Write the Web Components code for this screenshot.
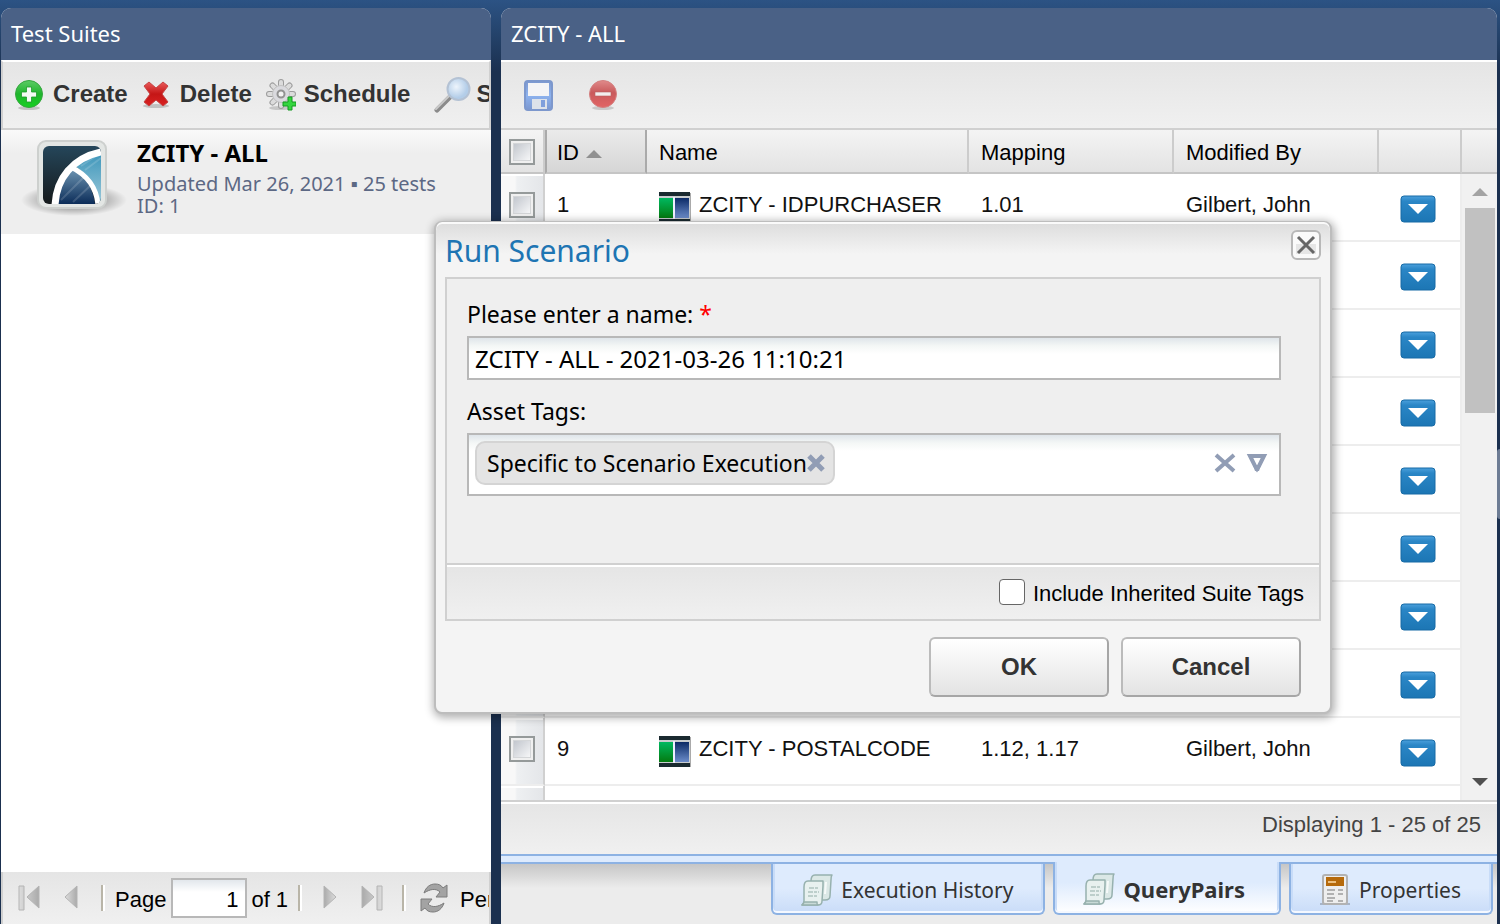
<!DOCTYPE html>
<html lang="en">
<head>
<meta charset="utf-8">
<title>Test Suites</title>
<style>
  html, body {
    height: 100%;
  }
  body {
    margin: 0;
    overflow: hidden;
    background: #1b304f linear-gradient(#2c5384, #1b304f 72px) no-repeat;
    font-family: "Liberation Sans", Arial, sans-serif;
    font-size: 22px;
    color: #000;
    --ui-font: "Noto Sans", Tahoma, sans-serif;
    --line: #d0d0d0;
    --bar: linear-gradient(#e5e5e5, #f0f0f0);
  }
</style>
</head>
<body>
<suite-app></suite-app>

<script>
const ICONS = {
  create: ['0 0 32 32', `
    <defs><linearGradient id="g" x2="0" y2="1"><stop stop-color="#5ccb66"/><stop offset=".5" stop-color="#1fb52c"/><stop offset="1" stop-color="#16d022"/></linearGradient></defs>
    <ellipse cx="16" cy="29" rx="11" ry="2" fill="#000" opacity=".18"/>
    <circle cx="16" cy="15" r="13.5" fill="url(#g)" stroke="#35a63e"/>
    <path d="M13.500 8h5v5h5v5h-5v5h-5v-5h-5v-5h5z" fill="#f4fbf4" stroke="#1d9a2a" stroke-width=".8"/>`],
  remove: ['0 0 32 32', `
    <defs><linearGradient id="g" x2="0" y2="1"><stop stop-color="#ea5a5a"/><stop offset=".5" stop-color="#c51616"/><stop offset="1" stop-color="#d92222"/></linearGradient></defs>
    <ellipse cx="16" cy="27" rx="13" ry="2" fill="#000" opacity=".18"/>
    <path d="M4 7l5-4 7 6 7-6 5 4-6 8 6 8-5 4-7-6-7 6-5-4 6-8z" fill="url(#g)" stroke="#c54444"/>`],
  schedule: ['0 0 32 32', `
    <ellipse cx="16" cy="29" rx="11" ry="2" fill="#000" opacity=".16"/>
    <g fill="none" stroke-linecap="round">
      <path d="M17 3v24M5 15h24M8.500 6.500l17 17M25.500 6.500l-17 17" stroke="#9c9c9c" stroke-width="6"/>
      <path d="M17 3v24M5 15h24M8.500 6.500l17 17M25.500 6.500l-17 17" stroke="#dcdcdc" stroke-width="4"/>
    </g>
    <circle cx="17" cy="15" r="8.500" fill="#dadade" stroke="#c2c2c2"/>
    <circle cx="17" cy="15" r="3.500" fill="#f2f2f2" stroke="#929292" stroke-width="2"/>
    <path d="M24 18h4v5h4v4h-4v4h-4v-4h-5v-4h5z" fill="#35d53f" stroke="#149a20"/>`],
  search: ['0 0 38 38', `
    <defs><radialGradient id="g" cx=".4" cy=".4"><stop stop-color="#eef5fc"/><stop offset="1" stop-color="#b3cde8"/></radialGradient></defs>
    <path d="M3 34L16 21" stroke="#8b8b8b" stroke-width="5" stroke-linecap="round"/>
    <path d="M2 33L15 20" stroke="#c9c9c9" stroke-width="2" stroke-linecap="round"/>
    <circle cx="24.500" cy="13" r="11" fill="url(#g)" stroke="#b4c2d4" stroke-width="2"/>`],
  save: ['0 0 32 32', `
    <defs><linearGradient id="g" x2="0" y2="1"><stop stop-color="#7c98cf"/><stop offset=".5" stop-color="#8db2ee"/><stop offset="1" stop-color="#7b97d0"/></linearGradient></defs>
    <rect x="2" y="2" width="27" height="29" rx="3" fill="url(#g)" stroke="#7d98cd" stroke-width="2"/>
    <path d="M5 4h21v13H5z" fill="#f4f4f6"/>
    <path d="M9 20h15v10H9z" fill="#dde2ea"/><path d="M18 21h4v7h-4z" fill="#7f9fdc"/>`],
  stop: ['0 0 32 32', `
    <defs><linearGradient id="g" x2="0" y2="1"><stop stop-color="#e08a8a"/><stop offset=".45" stop-color="#c95a5c"/><stop offset="1" stop-color="#e26565"/></linearGradient></defs>
    <ellipse cx="16" cy="29" rx="11" ry="2" fill="#000" opacity=".15"/>
    <circle cx="16" cy="15" r="13.500" fill="url(#g)" stroke="#d48080"/>
    <rect x="8" y="13" width="16" height="4" fill="#f3eeee" stroke="#b96060" stroke-width=".6"/>`],
  suite: ['0 0 106 76', `
    <defs>
      <radialGradient id="s"><stop stop-color="#000" stop-opacity=".6"/><stop offset="1" stop-opacity="0"/></radialGradient>
      <linearGradient id="d" x2="0" y2="1"><stop stop-color="#25465a"/><stop offset="1" stop-color="#151a1c"/></linearGradient>
      <linearGradient id="l" x2="0" y2="1"><stop stop-color="#3f97bb"/><stop offset="1" stop-color="#9dc9da"/></linearGradient>
      <linearGradient id="b" x2="0" y2="1"><stop stop-color="#7098b5"/><stop offset="1" stop-color="#0b2c58"/></linearGradient>
      <clipPath id="c"><rect x="22" y="6" width="58" height="58" rx="6"/></clipPath>
    </defs>
    <ellipse cx="53" cy="60" rx="53" ry="16" fill="url(#s)"/>
    <rect x="17" y="1" width="68" height="67" rx="8" fill="#e3e6e4" stroke="#cdd0ce" stroke-width="2"/>
    <g clip-path="url(#c)">
      <path d="M22 6h58v58H22z" fill="url(#d)"/>
      <path d="M80 14C62 18 54 26 54 26C66 34 76 46 77 64h3z" fill="url(#l)"/>
      <path d="M51 28C42 38 36 50 36 64h38C72 48 64 36 51 28z" fill="url(#b)"/>
      <path d="M40 60L64 36M52 62L70 45M60 26L78 14M64 30L80 18" stroke="#fff" stroke-opacity=".15" stroke-width="2"/>
      <path d="M80 12C52 18 35 38 34 66" fill="none" stroke="#fff" stroke-width="7"/>
      <path d="M50 27C66 35 76 48 77 66" fill="none" stroke="#fff" stroke-width="5"/>
    </g>`],
  first: ['0 0 32 32', `
    <defs><linearGradient id="g"><stop stop-color="#ddd"/><stop offset="1" stop-color="#aaa"/></linearGradient></defs>
    <path d="M6 4h5v24H6zM26 4v22L14 15z" fill="url(#g)" stroke="#b4b4b4"/>`],
  prev: ['0 0 32 32', `
    <defs><linearGradient id="g"><stop stop-color="#ddd"/><stop offset="1" stop-color="#aaa"/></linearGradient></defs>
    <path d="M22 4v22L10 15z" fill="url(#g)" stroke="#b4b4b4"/>`],
  next: ['0 0 32 32', `
    <defs><linearGradient id="g"><stop stop-color="#aaa"/><stop offset="1" stop-color="#ddd"/></linearGradient></defs>
    <path d="M10 4v22l12-11z" fill="url(#g)" stroke="#b4b4b4"/>`],
  last: ['0 0 32 32', `
    <defs><linearGradient id="g"><stop stop-color="#aaa"/><stop offset="1" stop-color="#ddd"/></linearGradient></defs>
    <path d="M6 4v22l12-11zM21 4h5v24h-5z" fill="url(#g)" stroke="#b4b4b4"/>`],
  refresh: ['0 0 32 32', `
    <g fill="#a3a3a3" stroke="#7c7c7c"><path d="M6 11C8 5 12 2 17 2c4 0 6 1 8 4l4-3v12H18l4-5c-4-4-10-3-16 1z"/>
    <path d="M26 21c-2 6-6 9-11 9-4 0-6-1-8-4l-4 3V17h11l-4 5c4 4 10 3 16-1z"/></g>`],
  pair: ['0 0 32 32', `
    <defs><linearGradient id="a" x2="0" y2="1"><stop stop-color="#00b860"/><stop offset="1" stop-color="#047a10"/></linearGradient>
    <linearGradient id="b" x2="0" y2="1"><stop stop-color="#0b2a66"/><stop offset="1" stop-color="#6b8cca"/></linearGradient></defs>
    <path d="M0 1h31v31H0z" fill="#1a2a30"/><path d="M0 5h32v23H0z" fill="#c9cdcf"/><path d="M31 2h1v30h-1z" fill="#aaa"/>
    <path d="M0 7h14v20H0z" fill="url(#a)"/><path d="M16 7h14v20H16z" fill="url(#b)"/><path d="M14 6h2v22h-2z" fill="#eef"/>`],
  scroll: ['0 0 32 32', `
    <g stroke="#97b1ae" stroke-linejoin="round" stroke-width="1.500">
    <path d="M10 7c0-4 1-6 4-6h17c-1 1-1 3-1 5l-1 16c0 3-2 4-5 4H10z" fill="#dbe8e6"/>
    <path d="M3 13c0-4 1-6 4-6h15c0 2 0 3 0 5l-1 15c0 3-1 4-4 4H1c1-1 2-2 2-4z" fill="#e8f1ef"/>
    <path d="M1 31c1-1 2-2 2-3h13c0 2 0 3 1 3z" fill="#c8dad7"/></g>
    <path d="M8 14h9M7 18h11M7 22h9" stroke="#aec4c0" stroke-width="1.500" stroke-dasharray="5 1 3 1"/>
    <path d="M25 8l-1 12" stroke="#f6faf9" stroke-width="2"/>`],
  sheet: ['0 0 32 32', `
    <path d="M1 29h30v2H1z" fill="#000" opacity=".2"/>
    <rect x="4" y="1" width="24" height="29" rx="2" fill="#eee" stroke="#b2b2b2" stroke-width="2"/>
    <path d="M7 3h18v9H7z" fill="#b66a0b"/><path d="M9 8h8" stroke="#edc07f" stroke-width="2"/>
    <path d="M8 16h8M8 20h7M8 24h8M8 27h6M19 16h5M19 20h5M19 27h5" stroke="#b1b1b1" stroke-width="2"/>`],
  menu: ['0 0 36 28', `
    <defs><linearGradient id="g" x2="0" y2="1"><stop stop-color="#4ba0dc"/><stop offset=".2" stop-color="#2a86c6"/><stop offset="1" stop-color="#1c76b4"/></linearGradient></defs>
    <rect x="1" y="1" width="34" height="26" rx="3" fill="url(#g)" stroke="#176ba6"/>
    <path d="M8 9h20l-10 10z" fill="#fff"/>`],
  close: ['0 0 30 30', `
    <rect x="1" y="1" width="28" height="28" rx="5" fill="#fafafa" stroke="#b8b8b8" stroke-width="2"/>
    <path d="M5 14h20v10H5z" fill="#e6e6e6"/>
    <path d="M7 7l16 16M23 7L7 23" stroke="#666" stroke-width="3"/>`],
  cross: ['0 0 22 20', `<path d="M2 2l18 16M20 2L2 18" stroke="#919db5" stroke-width="4"/>`],
  tagcross: ['0 0 18 18', `<path d="M2 2l14 14M16 2L2 16" stroke="#919db5" stroke-width="5"/>`],
  down: ['0 0 22 20', `<path d="M4 3h14l-5 10-2 3-2-3z" fill="none" stroke="#919db5" stroke-width="4"/><path d="M7 12h8l-2 6h-4z" fill="#919db5"/>`]
};

class AppIcon extends HTMLElement {
  connectedCallback() {
    const [box, body] = ICONS[this.getAttribute('name')];
    this.attachShadow({mode: 'open'}).innerHTML = `
      <style>
        :host { display: inline-block; flex: none; width: 32px; height: 32px; }
        svg { display: block; width: 100%; height: 100%; }
      </style>
      <svg viewBox="${box}" aria-hidden="true">${body}</svg>`;
  }
}

class TitlePanel extends HTMLElement {
  connectedCallback() {
    this.attachShadow({mode: 'open'}).innerHTML = `
      <style>
        :host { display: flex; flex-direction: column; min-width: 0; min-height: 0; background: #fff; border-radius: 10px 10px 0 0; overflow: hidden; }
        h2 { margin: 0; padding: 0 10px 2px; background: #4a6186; color: #fff; font: 22px/50px var(--ui-font); flex: none; }
      </style>
      <h2>${this.getAttribute('heading')}</h2>
      <slot></slot>`;
  }
}

class ToolBar extends HTMLElement {
  connectedCallback() {
    this.attachShadow({mode: 'open'}).innerHTML = `
      <style>
        :host { display: flex; align-items: center; flex: none; box-sizing: border-box; height: 70px; padding-left: 22px; gap: 24px; overflow: hidden; background: var(--bar); border-top: 2px solid #fff; border-bottom: 2px solid var(--line); }
        :host([framed]) { padding-left: 10px; gap: 12px; border-left: 2px solid var(--line); border-right: 2px solid var(--line); }
      </style>
      <slot></slot>`;
  }
}

class ToolButton extends HTMLElement {
  connectedCallback() {
    this.attachShadow({mode: 'open'}).innerHTML = `
      <style>
        :host { display: block; flex: none; }
        :host([large]) { margin-left: 12px; }
        button { display: flex; align-items: center; gap: 8px; border: 0; padding: 0; background: none; font: bold 24px/30px "Liberation Sans", Arial, sans-serif; color: #333; white-space: nowrap; cursor: pointer; }
        span { padding-bottom: 2px; }
        :host([large]) app-icon { width: 38px; height: 38px; }
        :host([large]) button { gap: 4px; }
      </style>
      <button aria-label="${this.getAttribute('label')}"><app-icon name="${this.getAttribute('icon')}"></app-icon><span><slot></slot></span></button>`;
  }
}

class SuiteItem extends HTMLElement {
  connectedCallback() {
    this.attachShadow({mode: 'open'}).innerHTML = `
      <style>
        :host { display: flex; gap: 10px; flex: none; box-sizing: border-box; height: 104px; padding: 10px 20px; background: linear-gradient(#fafafa, #eee 24px); font-family: var(--ui-font); }
        app-icon { width: 106px; height: 76px; }
        h3 { margin: 0 0 7px; font-size: 24px; line-height: 26px; }
        p { margin: 0; font-size: 20px; line-height: 22px; color: #5c6884; white-space: nowrap; }
      </style>
      <app-icon name="suite"></app-icon>
      <div>
        <h3><slot></slot></h3>
        <p>${this.getAttribute('updated')}</p>
        <p>${this.getAttribute('ident')}</p>
      </div>`;
  }
}

class PagingBar extends HTMLElement {
  connectedCallback() {
    this.attachShadow({mode: 'open'}).innerHTML = `
      <style>
        :host { display: flex; align-items: center; flex: none; box-sizing: border-box; height: 52px; margin-top: auto; padding-left: 10px; overflow: hidden; white-space: nowrap; background: var(--bar); border: solid var(--line); border-width: 0 2px; }
        button { flex: none; border: 0; padding: 0; margin-right: 10px; background: none; height: 32px; }
        i { flex: none; width: 2px; height: 26px; margin: 0 10px 0 4px; background: #b9b5a8; border-right: 2px solid #fff; }
        i + button { margin-left: 2px; }
        label { padding-top: 4px; }
        span { padding-top: 4px; margin-left: 4px; }
        span + i { margin-left: 10px; }
        button + span { margin-left: 0; }
        input { flex: none; box-sizing: border-box; width: 76px; height: 40px; margin-left: 5px; padding: 4px 7px 0; border: 2px solid #b8b8b8; border-radius: 0; text-align: right; font: inherit; color: #000; background: linear-gradient(#e2e7ec, #fff 12px); }
      </style>
      <button aria-label="First page"><app-icon name="first"></app-icon></button>
      <button aria-label="Previous page"><app-icon name="prev"></app-icon></button>
      <i></i>
      <label for="page">Page</label>
      <input id="page" value="1">
      <span>of 1</span>
      <i></i>
      <button aria-label="Next page"><app-icon name="next"></app-icon></button>
      <button aria-label="Last page"><app-icon name="last"></app-icon></button>
      <i></i>
      <button aria-label="Refresh"><app-icon name="refresh"></app-icon></button>
      <span>Per</span>`;
  }
}

class QueryGrid extends HTMLElement {
  connectedCallback() {
    const rows = [];
    for (let i = 1; i <= 10; i++) {
      rows.push({});
    }
    rows[0] = {id: '1', name: 'ZCITY - IDPURCHASER', mapping: '1.01', by: 'Gilbert, John'};
    rows[8] = {id: '9', name: 'ZCITY - POSTALCODE', mapping: '1.12, 1.17', by: 'Gilbert, John'};

    this.attachShadow({mode: 'open'}).innerHTML = `
      <style>
        :host { display: flex; flex: 1; min-height: 0; overflow: hidden; }
        .view { flex: 1; min-width: 0; overflow: hidden; }
        table { width: 100%; table-layout: fixed; border-collapse: separate; border-spacing: 0; }
        col.check { width: 44px; }
        col.id { width: 102px; }
        col.mid { width: 205px; }
        col.act { width: 83px; }
        th, td { box-sizing: border-box; padding: 0 12px; text-align: left; font-weight: normal; white-space: nowrap; overflow: hidden; }
        th, .filler { height: 44px; background: linear-gradient(#f4f4f4, #e3e3e3); border-bottom: 2px solid #c5c5c5; }
        th { padding-top: 4px; border-right: 2px solid #ccc; }
        th:first-child, td:first-child { padding: 2px 8px 0; }
        th.sorted { background: linear-gradient(#ebebeb, #d6d6d6); border-right-color: #aaa; border-left: 2px solid #aaa; padding: 4px 10px 0; }
        .sorted::after { content: ""; display: inline-block; margin: 0 0 2px 7px; border: solid transparent; border-width: 0 8px 8px; border-bottom-color: #909090; }
        td { height: 68px; padding-bottom: 4px; border-bottom: 2px solid #ededed; color: #111; }
        td:first-child { padding: 0 8px 4px; border-right: 2px solid #d0d0d0; background: linear-gradient(#fff, #fff) 0 0 / 100% 2px no-repeat, linear-gradient(90deg, #f8f8f8 14px, #eef0f2 16px, #e4e6e9); background-clip: padding-box; }
        td:last-child { padding: 4px 0 0 21px; border-right: 2px solid #ededed; }
        input { appearance: none; display: block; box-sizing: border-box; width: 26px; height: 26px; margin: 0; border: 2px solid #959a9a; background: linear-gradient(135deg, #b9bec6, #fff); box-shadow: inset 0 0 0 2px #f0f0f0, inset 0 0 0 3px #d4d6d8; }
        .name { display: flex; align-items: center; gap: 8px; }
        .name app-icon { margin-top: 2px; margin-bottom: -2px; }
        button { display: block; border: 0; padding: 0; background: none; cursor: pointer; }
        button app-icon { display: block; width: 36px; height: 28px; }
        aside { flex: none; width: 35px; display: flex; flex-direction: column; background: #f1f1f1; }
        .filler { box-sizing: border-box; }
        .bar { flex: 1; display: flex; flex-direction: column; align-items: center; padding: 14px 0; }
        .up, .down { border: solid transparent; border-width: 0 8px 8px; border-bottom-color: #a3a3a3; }
        .down { border-width: 8px 8px 0; border-top-color: #505050; margin-top: auto; }
        .thumb { width: 30px; height: 205px; margin-top: 12px; background: #c1c1c1; }
      </style>
      <div class="view">
        <table>
          <colgroup><col class="check"><col class="id"><col><col class="mid"><col class="mid"><col class="act"></colgroup>
          <thead><tr>
            <th><input type="checkbox" aria-label="Select all"></th>
            <th class="sorted">ID</th><th>Name</th><th>Mapping</th><th>Modified By</th><th></th>
          </tr></thead>
          <tbody>${rows.map(r => `<tr>
            <td><input type="checkbox" aria-label="Select row"></td>
            <td>${r.id || ''}</td>
            <td>${r.name ? `<div class="name"><app-icon name="pair"></app-icon>${r.name}</div>` : ''}</td>
            <td>${r.mapping || ''}</td>
            <td>${r.by || ''}</td>
            <td><button aria-label="Row menu"><app-icon name="menu"></app-icon></button></td>
          </tr>`).join('')}</tbody>
        </table>
      </div>
      <aside><div class="filler"></div><div class="bar"><div class="up"></div><div class="thumb"></div><div class="down"></div></div></aside>`;
  }
}

class StatusBar extends HTMLElement {
  connectedCallback() {
    this.attachShadow({mode: 'open'}).innerHTML = `
      <style>
        :host { display: block; flex: none; height: 52px; padding-right: 16px; border-top: 2px solid var(--line); box-shadow: inset 0 2px #fff; background: var(--bar); text-align: right; line-height: 46px; color: #444; }
      </style>
      <slot></slot>`;
  }
}

class TabStrip extends HTMLElement {
  connectedCallback() {
    this.attachShadow({mode: 'open'}).innerHTML = `
      <style>
        :host { display: block; flex: none; height: 70px; background: #ececec; }
        .edge { height: 6px; background: #deebfd; border: solid #8db2e3; border-width: 2px 0; }
        nav { display: flex; justify-content: flex-end; gap: 8px; height: 60px; padding-right: 4px; background: linear-gradient(#c6c6c6, #ececec 24px); }
      </style>
      <div class="edge"></div>
      <nav><slot></slot></nav>`;
  }
}

class TabLink extends HTMLElement {
  connectedCallback() {
    this.attachShadow({mode: 'open'}).innerHTML = `
      <style>
        a { display: flex; align-items: center; gap: 8px; box-sizing: border-box; height: 51px; padding: 2px 30px 0 28px; border: 2px solid #8db2e3; border-top: 0; border-radius: 0 0 6px 6px; box-shadow: inset 0 -2px #f4f8ff, inset 2px 0 #c8dcf8, inset -2px 0 #c8dcf8; background: linear-gradient(#deebfd 50%, #c9dcf8); font: 21px/28px var(--ui-font); color: #333; text-decoration: none; white-space: nowrap; }
        :host([active]) a { position: relative; margin-top: -2px; height: 53px; padding-right: 34px; background: linear-gradient(#deebfd 40%, #fff); font-size: 22px; font-weight: bold; }
      </style>
      <a href="#"><app-icon name="${this.getAttribute('icon')}"></app-icon><slot></slot></a>`;
  }
}

class RunDialog extends HTMLElement {
  connectedCallback() {
    this.attachShadow({mode: 'open'}).innerHTML = `
      <style>
        :host { position: absolute; left: 434px; top: 221px; width: 898px; box-sizing: border-box; padding: 0 9px 15px; border: 2px solid #bdbdbd; border-top-width: 1px; border-radius: 8px; background: #f4f4f4 linear-gradient(#dcdcdc, #f4f4f4 32px) no-repeat; box-shadow: inset 0 2px #fafafa, 1px 2px 8px 2px rgba(0, 0, 0, .3); }
        header { display: flex; justify-content: space-between; height: 55px; }
        h1 { margin: 0; font: 30px/58px var(--ui-font); color: #1e75b3; }
        .close { align-self: flex-start; margin-top: 8px; }
        button { border: 0; padding: 0; background: none; cursor: pointer; }
        .close app-icon { display: block; width: 30px; height: 30px; }
        .body { border: 2px solid var(--line); background: #efefef; }
        .fields { box-sizing: border-box; height: 284px; padding: 18px 38px 0 20px; font: 23px/34px var(--ui-font); }
        .fields label { display: block; }
        .fields b { font-weight: normal; color: #f00; }
        .fields input { display: block; box-sizing: border-box; width: 100%; height: 44px; margin: 5px 0 14px; padding: 0 6px; border: 2px solid #b8b8b8; border-radius: 0; font: 24px var(--ui-font); color: #000; background: linear-gradient(#dfe5ea, #f4f7f6 8px, #fff 16px); }
        .tags { display: flex; align-items: center; box-sizing: border-box; height: 63px; margin-top: 5px; padding: 0 11px 4px 6px; border: 2px solid #b8b8b8; background: linear-gradient(#dfe5ea, #f4f7f6 8px, #fff 16px); }
        .tag { display: flex; align-items: center; box-sizing: border-box; height: 44px; margin-right: auto; padding: 0 8px 0 10px; border: 2px solid #d4d4d4; border-radius: 10px; background: #e4e4e4; }
        .tag app-icon { width: 18px; height: 18px; }
        .tags button { display: flex; }
        .tags > button { margin-left: 10px; }
        .tags > button app-icon { width: 22px; height: 20px; }
        .options { display: flex; align-items: center; justify-content: flex-end; gap: 8px; height: 54px; padding-right: 15px; border-top: 2px solid var(--line); box-shadow: inset 0 2px #fff; background: var(--bar); }
        .options label { padding-top: 3px; }
        .options input { appearance: none; width: 26px; height: 26px; margin: 0; border: 1px solid #666; border-radius: 4px; background: #fff; }
        footer { display: flex; justify-content: flex-end; gap: 12px; padding: 16px 20px 0; }
        footer button { width: 180px; height: 60px; border: 2px solid #bbb; border-right-color: #a6a6a6; border-bottom-color: #a6a6a6; border-radius: 6px; background: linear-gradient(#fff, #e3e3e3); font: bold 24px "Liberation Sans", Arial, sans-serif; color: #333; }
      </style>
      <header>
        <h1>Run Scenario</h1>
        <button class="close" aria-label="Close"><app-icon name="close"></app-icon></button>
      </header>
      <div class="body">
        <div class="fields">
          <label for="name">Please enter a name: <b>*</b></label>
          <input id="name" value="ZCITY - ALL - 2021-03-26 11:10:21">
          <span>Asset Tags:</span>
          <div class="tags">
            <div class="tag">Specific to Scenario Execution<button aria-label="Remove tag"><app-icon name="tagcross"></app-icon></button></div>
            <button aria-label="Clear tags"><app-icon name="cross"></app-icon></button>
            <button aria-label="Show tags"><app-icon name="down"></app-icon></button>
          </div>
        </div>
        <div class="options">
          <input type="checkbox" id="inherit">
          <label for="inherit">Include Inherited Suite Tags</label>
        </div>
      </div>
      <footer><button>OK</button><button>Cancel</button></footer>`;
    this.setAttribute('role', 'dialog');
  }
}

class SuiteApp extends HTMLElement {
  connectedCallback() {
    this.attachShadow({mode: 'open'}).innerHTML = `
      <style>
        :host { display: grid; grid-template-columns: 490px minmax(0, 1fr); grid-template-rows: minmax(0, 1fr); gap: 10px; box-sizing: border-box; height: 100vh; padding: 8px 3px 0 1px; position: relative; }
        .grip { position: absolute; right: 0; top: 449px; width: 3px; height: 70px; border-radius: 3px 0 0 3px; background: #6d7c94; }
      </style>
      <title-panel heading="Test Suites">
        <tool-bar framed>
          <tool-button icon="create" label="Create">Create</tool-button>
          <tool-button icon="remove" label="Delete">Delete</tool-button>
          <tool-button icon="schedule" label="Schedule">Schedule</tool-button>
          <tool-button icon="search" label="Search" large>S</tool-button>
        </tool-bar>
        <suite-item updated="Updated Mar 26, 2021 ▪ 25 tests" ident="ID: 1">ZCITY - ALL</suite-item>
        <paging-bar></paging-bar>
      </title-panel>
      <title-panel heading="ZCITY - ALL">
        <tool-bar>
          <tool-button icon="save" label="Save"></tool-button>
          <tool-button icon="stop" label="Remove"></tool-button>
        </tool-bar>
        <query-grid></query-grid>
        <status-bar>Displaying 1 - 25 of 25</status-bar>
        <tab-strip>
          <tab-link icon="scroll">Execution History</tab-link>
          <tab-link icon="scroll" active>QueryPairs</tab-link>
          <tab-link icon="sheet">Properties</tab-link>
        </tab-strip>
      </title-panel>
      <div class="grip"></div>
      <run-dialog aria-label="Run Scenario"></run-dialog>`;
  }
}

customElements.define('app-icon', AppIcon);
customElements.define('title-panel', TitlePanel);
customElements.define('tool-bar', ToolBar);
customElements.define('tool-button', ToolButton);
customElements.define('suite-item', SuiteItem);
customElements.define('paging-bar', PagingBar);
customElements.define('query-grid', QueryGrid);
customElements.define('status-bar', StatusBar);
customElements.define('tab-strip', TabStrip);
customElements.define('tab-link', TabLink);
customElements.define('run-dialog', RunDialog);
customElements.define('suite-app', SuiteApp);
</script>
</body>
</html>
